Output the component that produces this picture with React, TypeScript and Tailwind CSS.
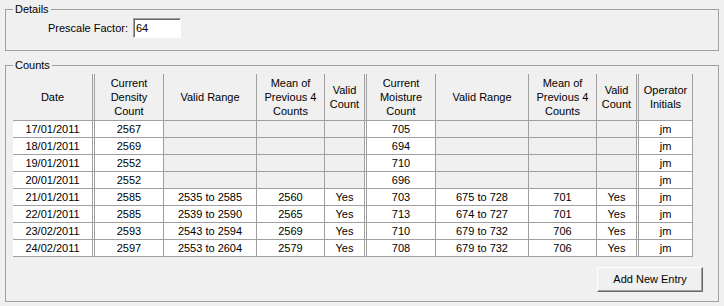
const cols = [
  { key: "date", label: ["Date"], w: "w-[80px]", edit: true },
  { key: "sep", w: "w-[2px]" },
  { key: "density", label: ["Current", "Density", "Count"], w: "w-[69px]", edit: true },
  { key: "dRange", label: ["Valid Range"], w: "w-[93px]" },
  { key: "dMean", label: ["Mean of", "Previous 4", "Counts"], w: "w-[68px]" },
  { key: "dValid", label: ["Valid", "Count"], w: "w-[40px]" },
  { key: "sep", w: "w-[2px]" },
  { key: "moisture", label: ["Current", "Moisture", "Count"], w: "w-[69px]", edit: true },
  { key: "mRange", label: ["Valid Range"], w: "w-[93px]" },
  { key: "mMean", label: ["Mean of", "Previous 4", "Counts"], w: "w-[68px]" },
  { key: "mValid", label: ["Valid", "Count"], w: "w-[40px]" },
  { key: "sep", w: "w-[2px]" },
  { key: "op", label: ["Operator", "Initials"], w: "w-[54px]", edit: true },
];

type Row = Record<string, string>;

const rows: Row[] = [
  { date: "17/01/2011", density: "2567", moisture: "705", op: "jm" },
  { date: "18/01/2011", density: "2569", moisture: "694", op: "jm" },
  { date: "19/01/2011", density: "2552", moisture: "710", op: "jm" },
  { date: "20/01/2011", density: "2552", moisture: "696", op: "jm" },
  { date: "21/01/2011", density: "2585", dRange: "2535 to 2585", dMean: "2560", dValid: "Yes", moisture: "703", mRange: "675 to 728", mMean: "701", mValid: "Yes", op: "jm" },
  { date: "22/01/2011", density: "2585", dRange: "2539 to 2590", dMean: "2565", dValid: "Yes", moisture: "713", mRange: "674 to 727", mMean: "701", mValid: "Yes", op: "jm" },
  { date: "23/02/2011", density: "2593", dRange: "2543 to 2594", dMean: "2569", dValid: "Yes", moisture: "710", mRange: "679 to 732", mMean: "706", mValid: "Yes", op: "jm" },
  { date: "24/02/2011", density: "2597", dRange: "2553 to 2604", dMean: "2579", dValid: "Yes", moisture: "708", mRange: "679 to 732", mMean: "706", mValid: "Yes", op: "jm" },
];

function GroupBox({ title, className, children }: { title: string; className: string; children: React.ReactNode }) {
  return (
    <div className={`relative border border-[#a0a0a0] ${className}`}>
      <span className="absolute -top-[8px] left-[7px] bg-[#f0f0f0] px-[2px] leading-[14px]">{title}</span>
      {children}
    </div>
  );
}

export default function App() {
  return (
    <div className="w-[724px] h-[306px] bg-[#f0f0f0] px-[5px] pt-[9px] font-['Liberation_Sans',Arial,sans-serif] text-[11px] text-black">
      {/* Details */}
      <GroupBox title="Details" className="h-[42px]">
        <div className="flex items-center pt-[8px]">
          <span className="w-[122px] text-right">Prescale Factor:</span>
          <div className="ml-[5px] flex h-[20px] w-[48px] items-center border border-t-[#a0a0a0] border-l-[#a0a0a0] border-b-white border-r-white bg-white pl-[2px] shadow-[inset_1px_1px_0_#696969]">
            64
          </div>
        </div>
      </GroupBox>

      {/* Counts */}
      <GroupBox title="Counts" className="mt-[14px] h-[237px]">
        <div className="pl-[7px] pt-[8px]">
          <div className="w-[680px] overflow-hidden">
            <div className="flex h-[47px] border-b border-[#a0a0a0]">
              {cols.map((c, i) => (
                <div
                  key={i}
                  className={`${c.w} flex shrink-0 flex-col items-center justify-center border-r border-[#a0a0a0] text-center leading-[14px]`}
                >
                  {c.label?.map((l) => (
                    <span key={l}>{l}</span>
                  ))}
                </div>
              ))}
            </div>
            {rows.map((r, ri) => (
              <div key={ri} className="flex h-[17px] border-b border-[#a0a0a0]">
                {cols.map((c, i) => {
                  const val = r[c.key];
                  const white = c.key === "sep" || c.edit || !!val;
                  return (
                    <div
                      key={i}
                      className={`${c.w} flex shrink-0 items-center justify-center border-r border-[#a0a0a0] ${white ? "bg-white" : "bg-[#f0f0f0]"}`}
                    >
                      {val}
                    </div>
                  );
                })}
              </div>
            ))}
          </div>
        </div>
        <div className="flex justify-end pr-[15px] pt-[10px]">
          <button className="h-[25px] w-[106px] border border-t-white border-l-white border-b-[#696969] border-r-[#696969] bg-[#f0f0f0] text-[11px] shadow-[inset_-1px_-1px_0_#a0a0a0]">
            Add New Entry
          </button>
        </div>
      </GroupBox>
    </div>
  );
}
